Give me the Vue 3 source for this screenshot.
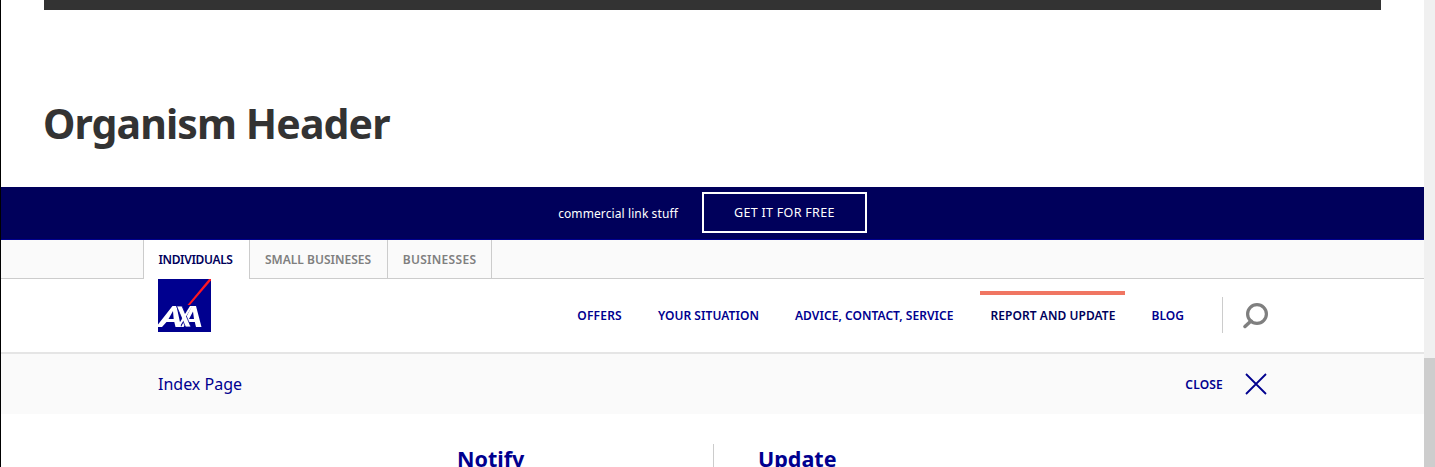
<script setup>
const tabs = [
  { label: 'INDIVIDUALS', active: true },
  { label: 'SMALL BUSINESES', active: false },
  { label: 'BUSINESSES', active: false },
]
const links = [
  { label: 'OFFERS', active: false },
  { label: 'YOUR SITUATION', active: false },
  { label: 'ADVICE, CONTACT, SERVICE', active: false },
  { label: 'REPORT AND UPDATE', active: true },
  { label: 'BLOG', active: false },
]
</script>

<template>
  <div class="page">
    <main class="main">
      <section class="intro">
        <div class="darkbar"></div>
        <h1 class="title">Organism Header</h1>
      </section>
      <div class="promo">
        <span class="promo-text">commercial link stuff</span>
        <a class="promo-btn">GET IT FOR FREE</a>
      </div>
      <div class="tabstrip">
        <a v-for="t in tabs" :key="t.label" class="tab" :class="{ on: t.active }">{{ t.label }}</a>
      </div>
      <div class="navrow">
        <svg class="logo" viewBox="0 0 53 53" width="53" height="53">
          <rect width="53" height="53" fill="#00008f" />
          <path d="M51 0 L29.500 26 L32 26 L53 1.500 L53 0 Z" fill="#ff1721" />
          <path d="M0 48 V45.500 L14.500 27 H18.500 L23 48 H17.500 L16.300 43 H8.500 L4 48 Z M15 32 L10.500 40 H15.700 Z" fill="#fff" fill-rule="evenodd" />
          <path d="M34 27 H38 L43.500 48 H38 L36.800 43 H29 L25.500 48 H23 Z M35 32.500 L31 40 H36 Z" fill="#fff" fill-rule="evenodd" />
          <path d="M18.500 27 H24 L33 48 H27.500 Z" fill="#fff" stroke="#00008f" stroke-width="0.8" />
          <path d="M32 27 H34.500 L21.500 48 H19 Z" fill="#fff" />
        </svg>
        <nav class="links">
          <a v-for="l in links" :key="l.label" class="link" :class="{ on: l.active }">{{ l.label }}</a>
        </nav>
        <div class="search">
          <svg viewBox="0 0 26 26" width="26" height="26">
            <circle cx="14" cy="11" r="9.400" fill="none" stroke="#7f7f7f" stroke-width="3.200" />
            <path d="M8 18 L2 23.500" stroke="#7f7f7f" stroke-width="3.500" stroke-linecap="round" />
          </svg>
        </div>
      </div>
      <div class="panelhead">
        <span class="index">Index Page</span>
        <span class="close">
          <span class="close-text">CLOSE</span>
          <svg viewBox="0 0 22 22" width="22" height="22">
            <path d="M1 1 L21 21 M21 1 L1 21" stroke="#00008f" stroke-width="1.800" />
          </svg>
        </span>
      </div>
      <div class="cols">
        <div class="col col-left"><h2 class="coltitle">Notify</h2></div>
        <div class="col col-right"><h2 class="coltitle">Update</h2></div>
      </div>
    </main>
    <div class="scrollbar"><div class="thumb"></div></div>
  </div>
</template>

<style>
html, body { margin: 0; overflow: hidden; background: #fff; }
</style>

<style scoped>
.page {
  display: flex;
  width: 1435px;
  height: 467px;
  overflow: hidden;
  font-family: "Noto Sans", "Open Sans", sans-serif;
}
.main {
  width: 1424px;
  height: 467px;
  overflow: hidden;
  flex: none;
  border-left: 1px solid #000;
  box-sizing: border-box;
}
.scrollbar {
  width: 11px;
  height: 467px;
  background: #f0f0f0;
  display: flex;
  flex-direction: column;
  justify-content: flex-end;
}
.thumb { height: 109px; background: #cdcdcd; }
.intro { height: 187px; padding: 0 43px; box-sizing: border-box; }
.darkbar { height: 10px; width: 1337px; background: #333; }
.title {
  margin: 0;
  margin-left: -1px;
  padding-top: 83px;
  font-size: 41px;
  line-height: 60px;
  font-weight: 700;
  color: #333;
  letter-spacing: -0.9px;
}
.promo {
  height: 53px;
  box-sizing: border-box;
  background: #00005b;
  border-bottom: 1px solid #00008f;
  display: flex;
  align-items: center;
  justify-content: center;
  gap: 24px;
  color: #fff;
}
.promo-text { font-size: 12px; letter-spacing: 0.1px; }
.promo-btn {
  box-sizing: border-box;
  width: 165px;
  height: 41px;
  margin-bottom: 2px;
  border: 2px solid #fff;
  display: flex;
  align-items: center;
  justify-content: center;
  font-size: 12.500px;
  letter-spacing: 0.3px;
}
.tabstrip {
  height: 39px;
  box-sizing: border-box;
  background: #fafafa;
  border-bottom: 1px solid #ccc;
  display: flex;
  padding-left: 142px;
}
.tab {
  box-sizing: border-box;
  height: 39px;
  display: flex;
  align-items: center;
  justify-content: center;
  font-size: 12px;
  font-weight: 600;
  color: #7f7f7f;
  border-right: 1px solid #ccc;
  white-space: nowrap;
}
.tab:nth-child(2) { width: 138px; padding-right: 1px; }
.tab:nth-child(3) { width: 104px; letter-spacing: 0.3px; }
.tab.on {
  background: #fff;
  color: #00005b;
  border-left: 1px solid #ccc;
  width: 107px;
  padding-right: 2px;
  letter-spacing: -0.35px;
}
.navrow {
  height: 75px;
  box-sizing: border-box;
  border-bottom: 2px solid #e5e5e5;
  display: flex;
  align-items: flex-start;
  padding-left: 157px;
}
.logo { flex: none; display: block; }
.links {
  display: flex;
  gap: 15px;
  margin-left: auto;
  height: 73px;
  padding-top: 12px;
  box-sizing: border-box;
}
.link {
  box-sizing: border-box;
  height: 48px;
  padding: 13px 10px 0 11px;
  font-size: 12px;
  font-weight: 600;
  line-height: 16px;
  letter-spacing: 0.05px;
  color: #00008f;
  border-top: 4px solid transparent;
  white-space: nowrap;
}
.link:first-child { letter-spacing: 0.2px; }
.link:nth-child(4) { margin-left: 1px; }
.link.on { border-top-color: #f07662; color: #00005b; }
.search {
  margin: 18px 156px 0 28px;
  width: 46px;
  height: 36px;
  border-left: 1px solid #ccc;
  box-sizing: border-box;
  padding: 6px 0 0 20px;
}
.search svg { display: block; }
.panelhead {
  height: 60px;
  background: #fafafa;
  display: flex;
  align-items: center;
  justify-content: space-between;
  padding: 0 157px 0 157px;
}
.index { font-size: 16px; color: #00008f; }
.close { display: flex; align-items: center; gap: 22px; }
.close-text { font-size: 12px; font-weight: 600; letter-spacing: 0.2px; color: #00008f; }
.close svg { display: block; }
.cols { display: flex; padding-top: 30px; }
.col { box-sizing: border-box; }
.col-left { width: 712px; padding-left: 456px; }
.col-right { border-left: 1px solid #ccc; padding-left: 44px; height: 60px; }
.coltitle {
  margin: 0;
  font-size: 21.500px;
  line-height: 30px;
  font-weight: 700;
  color: #00008f;
}
</style>
